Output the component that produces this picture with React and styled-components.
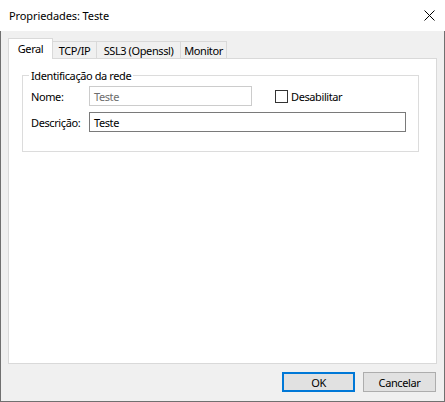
import React from 'react';
import styled, { createGlobalStyle } from 'styled-components';

const GlobalStyle = createGlobalStyle`
  html, body { margin: 0; padding: 0; background: #ffffff; }
  body {
    font-family: "Noto Sans", "Segoe UI", sans-serif;
    font-size: 11px;
    letter-spacing: -0.4px;
    color: #000000;
  }
  * { box-sizing: border-box; }
`;

const Window = styled.div`
  width: 445px;
  height: 402px;
  display: flex;
  flex-direction: column;
  background: #ffffff;
`;

const TitleBar = styled.div`
  height: 31px;
  flex: none;
  display: flex;
  align-items: center;
  justify-content: space-between;
  padding: 0 10px 0 9px;
  font-size: 11px;
  letter-spacing: -0.1px;
  background: #ffffff;
`;

const CloseGlyph = styled.svg`
  display: block;
  width: 11px;
  height: 11px;
`;

const Frame = styled.div`
  flex: 1;
  display: flex;
  flex-direction: column;
  background: #f0f0f0;
  border: 1px solid #707070;
  border-top: none;
  padding: 7px 7px 9px 7px;
`;

const TabStrip = styled.div`
  height: 20px;
  flex: none;
  display: flex;
  align-items: flex-end;
  position: relative;
  z-index: 1;
`;

const Tab = styled.div`
  width: ${(p) => p.$w}px;
  display: flex;
  align-items: center;
  justify-content: center;
  border: 1px solid #d9d9d9;
  border-bottom: none;
  ${(p) =>
    p.$active
      ? `
    height: 21px;
    margin-bottom: -1px;
    background: #ffffff;
    padding-bottom: 2px;
  `
      : `
    height: 17px;
    border-left: none;
    background: #f0f0f0;
  `}
`;

const Panel = styled.div`
  flex: 1;
  background: #ffffff;
  border: 1px solid #d9d9d9;
  padding: 9px 17px 0 13px;
`;

const Group = styled.fieldset`
  margin: 0;
  padding: 0;
  min-width: 0;
  border: 1px solid #dcdcdc;
`;

const Caption = styled.legend`
  margin-left: 6px;
  padding: 0 2px;
  line-height: 15px;
`;

const FormGrid = styled.div`
  display: grid;
  grid-template-columns: 58px 1fr;
  row-gap: 6px;
  align-items: center;
  padding: 3px 12px 19px 8px;
`;

const FieldRow = styled.div`
  display: flex;
  align-items: center;
`;

const TextBox = styled.div`
  height: 20px;
  width: ${(p) => (p.$w ? `${p.$w}px` : '100%')};
  display: flex;
  align-items: center;
  padding: 0 4px;
  background: #ffffff;
  border: 1px solid ${(p) => (p.$disabled ? '#cccccc' : '#7a7a7a')};
  color: ${(p) => (p.$disabled ? '#6d6d6d' : '#000000')};
`;

const CheckLabel = styled.label`
  display: flex;
  align-items: center;
  gap: 3px;
  margin-left: 23px;
`;

const CheckBox = styled.span`
  width: 13px;
  height: 13px;
  border: 1px solid #333333;
  background: #ffffff;
`;

const Footer = styled.div`
  flex: none;
  display: flex;
  justify-content: flex-end;
  gap: 8px;
  padding: 8px 1px 0 0;
`;

const Button = styled.div`
  width: 73px;
  height: 20px;
  display: flex;
  align-items: center;
  justify-content: center;
  background: #e1e1e1;
  border: ${(p) => (p.$default ? '2px solid #0078d7' : '1px solid #adadad')};
`;

const tabs = [
  { label: 'Geral', w: 45, active: true },
  { label: 'TCP/IP', w: 44 },
  { label: 'SSL3 (Openssl)', w: 84 },
  { label: 'Monitor', w: 46 },
];

export default function App() {
  return (
    <>
      <GlobalStyle />
      <Window>
        <TitleBar>
          <span>Propriedades: Teste</span>
          <CloseGlyph viewBox="0 0 11 11">
            <path d="M0.5 0.5 L10.5 10.5 M10.5 0.5 L0.5 10.5" stroke="#000" strokeWidth="1" fill="none" />
          </CloseGlyph>
        </TitleBar>
        <Frame>
          <TabStrip>
            {tabs.map((t) => (
              <Tab key={t.label} $w={t.w} $active={t.active}>
                {t.label}
              </Tab>
            ))}
          </TabStrip>
          <Panel>
            <Group>
              <Caption>Identificação da rede</Caption>
              <FormGrid>
                <span>Nome:</span>
                <FieldRow>
                  <TextBox $w={163} $disabled>Teste</TextBox>
                  <CheckLabel>
                    <CheckBox />
                    Desabilitar
                  </CheckLabel>
                </FieldRow>
                <span>Descrição:</span>
                <TextBox>Teste</TextBox>
              </FormGrid>
            </Group>
          </Panel>
          <Footer>
            <Button $default>OK</Button>
            <Button>Cancelar</Button>
          </Footer>
        </Frame>
      </Window>
    </>
  );
}
